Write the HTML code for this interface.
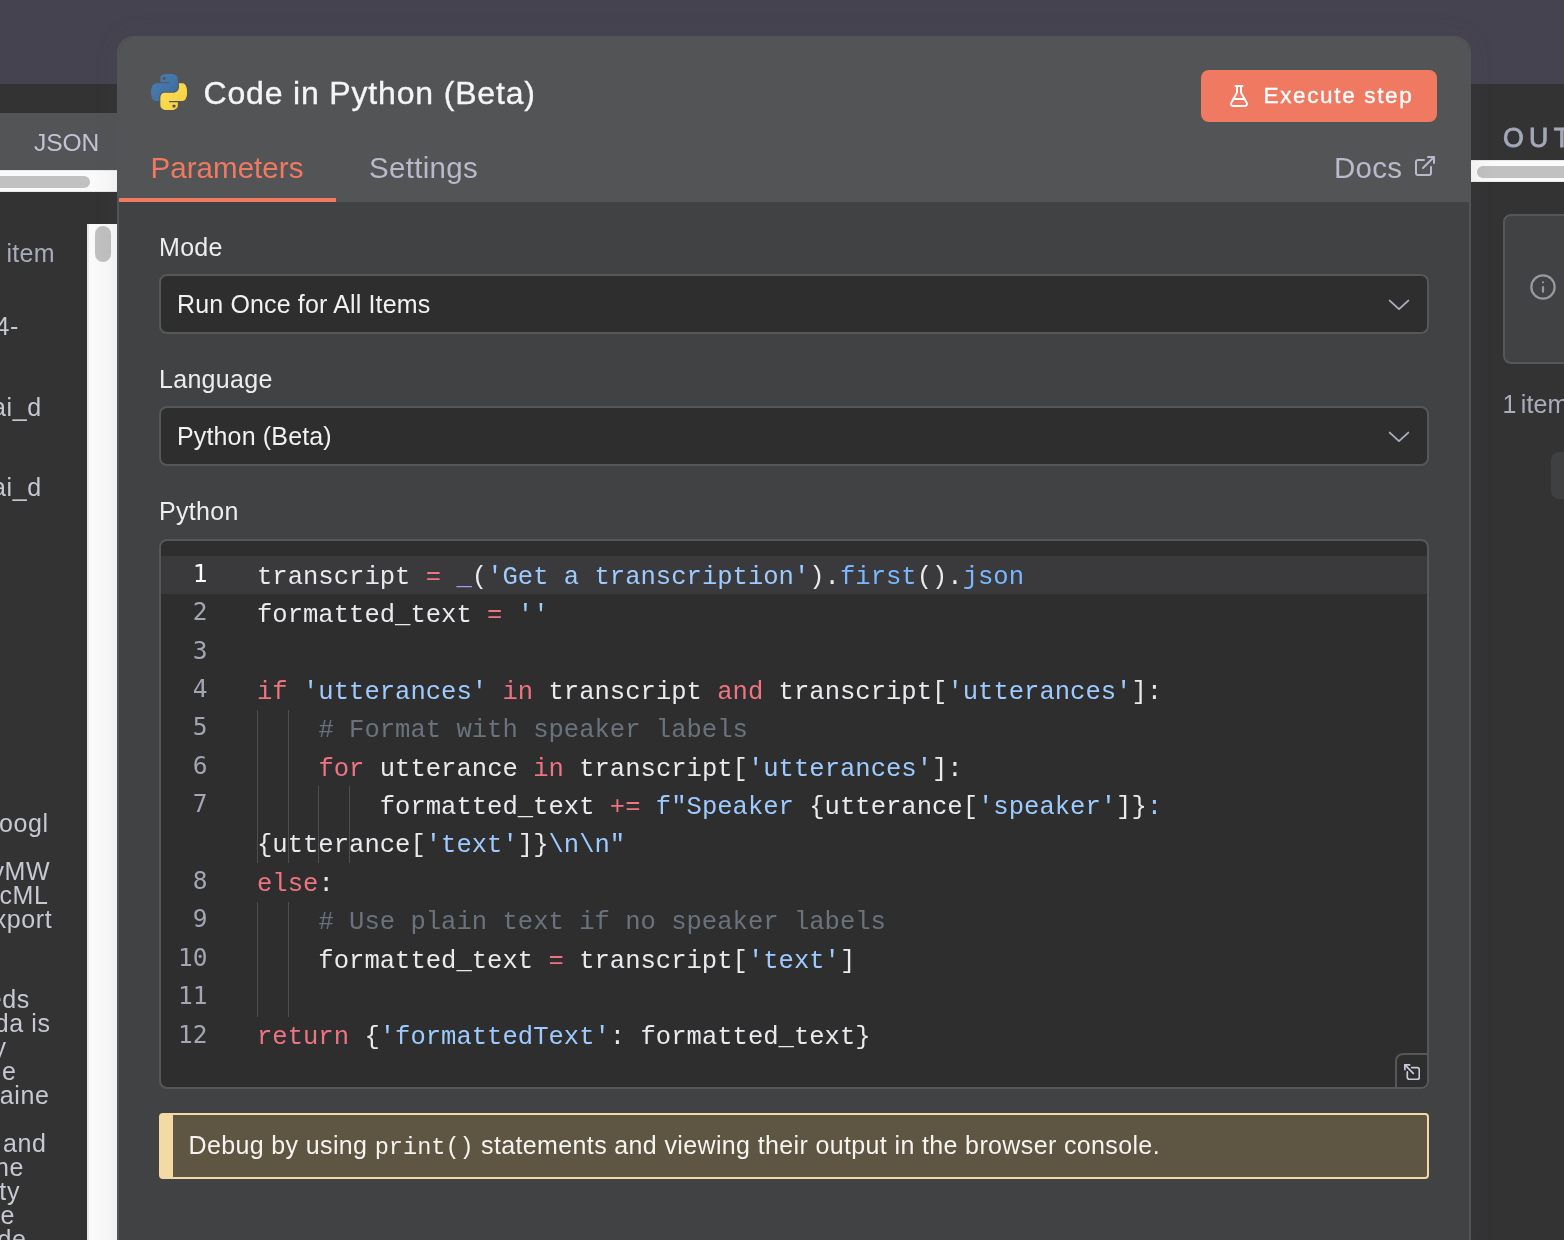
<!DOCTYPE html>
<html lang="en">
<head>
<meta charset="utf-8">
<title>Code in Python (Beta)</title>
<style>
*{box-sizing:border-box;margin:0;padding:0}
html,body{width:1564px;height:1240px;overflow:hidden}
body{background:#464350;font-family:"Liberation Sans",sans-serif;position:relative;color:#eee}
.abs{position:absolute}
#lp,#rp,#modal{will-change:transform}
/* side panels */
#lp{left:0;top:84px;width:117px;height:1156px;background:#333334;overflow:hidden}
#lp .top{left:0;top:0;width:117px;height:29px;background:#333334}
#lp .tabs{left:0;top:29px;width:117px;height:57px;background:#535456}
#lp .json{left:34px;top:44.6px;font-size:24.6px;line-height:28px;color:#c0c4d5;letter-spacing:-.1px}
#lp .hs{left:0;top:86px;width:117px;height:22px;background:#fafafa;border-top:1px solid #e8e8e8;border-bottom:1px solid #e8e8e8}
#lp .hst{left:-20px;top:92px;width:110px;height:12px;border-radius:6px;background:#c1c1c1}
#lp .vs{left:87px;top:140px;width:30px;height:1016px;background:#fafafa;border-left:2px solid #e8e8e8}
#lp .vst{left:95px;top:142px;width:16px;height:36px;border-radius:8px;background:#c1c1c1}
#lp .t{left:0;font-size:25px;line-height:24px;color:#c9cad3;white-space:pre;letter-spacing:.6px}
#rp{left:1471px;top:84px;width:93px;height:1156px;background:#333334;overflow:hidden}
#rp .out{left:32px;top:37px;font-size:28.4px;line-height:32px;font-weight:normal;-webkit-text-stroke:.9px #a4a8b8;letter-spacing:5.7px;color:#a4a8b8;white-space:pre;transform:scaleX(.94);transform-origin:0 0}
#rp .hs{left:0;top:76px;width:93px;height:22px;background:#fafafa;border-top:1px solid #e8e8e8;border-bottom:1px solid #e8e8e8}
#rp .hst{left:6px;top:82px;width:110px;height:12px;border-radius:6px;background:#c1c1c1}
#rp .box{left:32px;top:130px;width:90px;height:150px;border:2px solid #565759;border-radius:8px;background:#414243}
#rp .box2{left:80px;top:368px;width:40px;height:47px;border-radius:8px;background:#3f4041}
#rp .items{left:31.5px;top:306px;font-size:25px;line-height:28px;color:#a9acbc;white-space:pre;word-spacing:-2.8px;letter-spacing:.1px}
/* modal */
#modal{left:117px;top:36px;width:1354px;height:1230px;background:#414243;border:2px solid #535456;border-radius:17px 17px 0 0;overflow:hidden;box-shadow:0 0 26px rgba(88,86,104,.11)}
#hdr{left:0;top:0;width:1350px;height:164px;background:#535456}
#title{left:84.5px;top:34.7px;font-size:32px;line-height:40px;color:#f5f5f8;white-space:pre;letter-spacing:.83px;-webkit-text-stroke:.35px #f5f5f8}
#btn{left:1082px;top:32px;width:236px;height:52px;border-radius:8px;background:#f07a61}
#btn span{left:62.5px;top:10.3px;font-size:22.5px;line-height:32px;color:#fff;white-space:pre;letter-spacing:1.65px;-webkit-text-stroke:.35px #fff}
.tab{top:112px;font-size:29.5px;line-height:36px;white-space:pre;letter-spacing:.3px}
#tabp{left:31.5px;color:#f07a61;letter-spacing:.05px}
#tabs{left:250px;color:#b6bacb}
#docs{left:1215px;color:#b6bacb}
#ul{left:0;top:160px;width:217px;height:4px;background:#f07a61}
.lbl{left:40px;font-size:25px;line-height:30px;color:#ededf0;white-space:pre;letter-spacing:.3px}
.sel{left:40px;width:1270px;height:60px;border:2px solid #565759;border-radius:8px;background:#2e2e2e}
.sel span{left:16px;top:13px;font-size:25px;line-height:30px;color:#f1f1f3;white-space:pre;letter-spacing:.15px}
.sel svg{left:1226px;top:20.8px}
#ed{left:40px;top:501px;width:1270px;height:550px;border:2px solid #565759;border-radius:8px;background:#2e2e2e;overflow:hidden}
#ed .act{left:0;top:15px;width:1266px;height:38px;background:#3a3a3c}
.ln,.cl{font-family:"Liberation Mono",monospace;font-size:25.57px;line-height:38.4px;white-space:pre}
.ln{left:0;width:46.5px;text-align:right;color:#a3a5b2;font-family:"DejaVu Sans Mono","Liberation Mono",monospace;font-size:24.5px;margin-top:-1.2px}
.cl{left:96px;color:#eaeaee;margin-top:2.5px}
.k{color:#ee7482}.o{color:#ee7482}.s{color:#9ecbff}.c{color:#6a737d}.p{color:#b392f0}.f{color:#79b8ff}
.g{width:1px;background:#4e4e51}
#exp{left:1234px;top:512px;width:40px;height:40px;border:2px solid #565759;border-radius:8px 0 0 0;background:#2e2e2e}
#note{left:40px;top:1075px;width:1270px;height:66px;background:#5e5542;border:2px solid #f3d9a4;border-left:14px solid #f3d9a4;border-radius:4px}
#note span{left:15.5px;top:15.4px;font-size:25px;line-height:30px;color:#f6f4ee;white-space:pre;letter-spacing:.365px}
#note code{font-family:"Liberation Mono",monospace;font-size:23.6px;letter-spacing:0}
</style>
</head>
<body>
<div id="lp" class="abs">
  <div class="abs top"></div>
  <div class="abs tabs"></div>
  <div class="abs json">JSON</div>
  <div class="abs hs"></div><div class="abs hst"></div>
  <div class="abs vs"></div><div class="abs vst"></div>
  <div class="abs t" style="left:6.5px;top:157.3px;color:#a8abba;letter-spacing:.3px">item</div>
  <div class="abs t" style="left:auto;right:98px;top:230.3px;color:#c6c8d2">4-</div>
  <div class="abs t" style="left:auto;right:75.3px;top:311.3px;color:#c6c8d2">ai_d</div>
  <div class="abs t" style="left:auto;right:75.3px;top:390.6px;color:#c6c8d2">ai_d</div>
  <div class="abs t" style="left:auto;right:68.3px;top:727.3px;color:#c6c8d2">oogl</div>
  <div class="abs t" style="left:auto;right:66.8px;top:775.3px;color:#c6c8d2">yMW</div>
  <div class="abs t" style="left:auto;right:68.6px;top:799.3px;color:#c6c8d2">cML</div>
  <div class="abs t" style="left:auto;right:64.7px;top:823.3px;color:#c6c8d2">xport</div>
  <div class="abs t" style="left:auto;right:87.1px;top:903.3px;color:#c6c8d2">eds</div>
  <div class="abs t" style="left:auto;right:66.5px;top:927.3px;color:#c6c8d2">da is</div>
  <div class="abs t" style="left:auto;right:110.5px;top:951.3px;color:#c6c8d2">y</div>
  <div class="abs t" style="left:auto;right:100.5px;top:975.3px;color:#c6c8d2">e</div>
  <div class="abs t" style="left:auto;right:67.5px;top:999.3px;color:#c6c8d2">aine</div>
  <div class="abs t" style="left:auto;right:70.4px;top:1047.3px;color:#c6c8d2"> and</div>
  <div class="abs t" style="left:auto;right:93.1px;top:1071.3px;color:#c6c8d2">ne</div>
  <div class="abs t" style="left:auto;right:97px;top:1095.3px;color:#c6c8d2">ty</div>
  <div class="abs t" style="left:auto;right:102px;top:1119.3px;color:#c6c8d2">e</div>
  <div class="abs t" style="left:auto;right:90.6px;top:1143.3px;color:#c6c8d2">de</div>
</div>
<div id="rp" class="abs">
  <div class="abs out">OUTPUT</div>
  <div class="abs hs"></div><div class="abs hst"></div>
  <div class="abs box"></div>
  <svg class="abs" style="left:58.1px;top:188.6px" width="28" height="28" viewBox="0 0 24 24" fill="none" stroke="#999a9f" stroke-width="1.9" stroke-linecap="round" stroke-linejoin="round"><circle cx="12" cy="12" r="10"/><path d="M12 16v-4"/><path d="M12 8h.01"/></svg>
  <div class="abs items">1 item</div>
  <div class="abs box2"></div>
</div>
<div id="modal" class="abs">
  <div id="hdr" class="abs"></div>
  <svg class="abs" id="pylogo" style="left:32px;top:36px" width="36" height="36.4" viewBox="0 0 110.4 111.6"><defs><linearGradient id="pb" x1="0" y1="0" x2="1" y2="1"><stop offset="0" stop-color="#4a7fb5"/><stop offset="1" stop-color="#3d6a9b"/></linearGradient><linearGradient id="pyl" x1="0" y1="0" x2="1" y2="1"><stop offset="0" stop-color="#fbe05a"/><stop offset="1" stop-color="#f7cd3c"/></linearGradient></defs><path fill="url(#pb)" d="M54.919 0c-4.584.022-8.961.413-12.813 1.095C30.760 3.099 28.700 7.295 28.700 15.032v10.219h26.813v3.406H18.638c-7.792 0-14.616 4.684-16.750 13.594-2.462 10.213-2.571 16.586 0 27.250 1.906 7.938 6.458 13.594 14.250 13.594h9.218v-12.250c0-8.850 7.657-16.656 16.750-16.656h26.782c7.455 0 13.406-6.138 13.406-13.625V15.032c0-7.266-6.130-12.725-13.406-13.937C64.282.328 59.502-.02 54.919 0zm-14.500 8.220c2.770 0 5.031 2.298 5.031 5.125 0 2.816-2.262 5.093-5.031 5.093-2.780 0-5.031-2.277-5.031-5.093 0-2.827 2.252-5.125 5.031-5.125z"/><path fill="url(#pyl)" d="M85.638 28.657v11.906c0 9.231-7.826 17-16.750 17H42.106c-7.336 0-13.406 6.279-13.406 13.625V96.720c0 7.266 6.319 11.540 13.406 13.625 8.488 2.496 16.627 2.947 26.782 0 6.750-1.954 13.406-5.888 13.406-13.625V86.501H55.513v-3.406h40.187c7.792 0 10.696-5.435 13.406-13.594 2.799-8.399 2.680-16.476 0-27.250-1.926-7.757-5.604-13.594-13.406-13.594zM70.575 93.313c2.780 0 5.031 2.278 5.031 5.094 0 2.826-2.252 5.125-5.031 5.125-2.770 0-5.031-2.299-5.031-5.125 0-2.816 2.262-5.094 5.031-5.094z"/></svg>
  <div id="title" class="abs">Code in Python (Beta)</div>
  <div id="btn" class="abs"><svg class="abs" style="left:25.9px;top:14px" width="24" height="24" viewBox="0 0 24 24" fill="none" stroke="#fff" stroke-width="1.9" stroke-linecap="round" stroke-linejoin="round"><path d="M14 2v6a2 2 0 0 0 .245.96l5.51 10.08A2 2 0 0 1 18 22H6a2 2 0 0 1-1.755-2.96l5.51-10.08A2 2 0 0 0 10 8V2"/><path d="M6.453 15h11.094"/><path d="M8.5 2h7"/></svg><span class="abs">Execute step</span></div>
  <div id="tabp" class="abs tab">Parameters</div>
  <div id="tabs" class="abs tab">Settings</div>
  <div id="docs" class="abs tab">Docs</div>
  <svg class="abs" style="left:1294px;top:116px" width="24" height="24" viewBox="0 0 24 24" fill="none" stroke="#b6bacb" stroke-width="2" stroke-linecap="round" stroke-linejoin="round"><path d="M15 3h6v6"/><path d="M10 14 21 3"/><path d="M18 13v6a2 2 0 0 1-2 2H5a2 2 0 0 1-2-2V8a2 2 0 0 1 2-2h6"/></svg>
  <div id="ul" class="abs"></div>
  <div class="abs lbl" style="top:194px">Mode</div>
  <div class="abs sel" style="top:236px"><span class="abs">Run Once for All Items</span><svg class="abs" width="24" height="16" viewBox="0 0 24 16" fill="none" stroke="#abaebd" stroke-width="1.9" stroke-linecap="round" stroke-linejoin="round"><path d="M2.7 3.6 12 12.1 21.3 3.6"/></svg></div>
  <div class="abs lbl" style="top:326px">Language</div>
  <div class="abs sel" style="top:368px"><span class="abs">Python (Beta)</span><svg class="abs" width="24" height="16" viewBox="0 0 24 16" fill="none" stroke="#abaebd" stroke-width="1.9" stroke-linecap="round" stroke-linejoin="round"><path d="M2.7 3.6 12 12.1 21.3 3.6"/></svg></div>
  <div class="abs lbl" style="top:458px">Python</div>
  <div id="ed" class="abs"><div class="abs act"></div>
    <div class="abs ln" style="top:15.0px;color:#fff">1</div>
    <div class="abs cl" style="top:15.0px">transcript <span class="o">=</span> <span class="p">_</span>(<span class="s">'Get a transcription'</span>).<span class="f">first</span>().<span class="f">json</span></div>
    <div class="abs ln" style="top:53.4px">2</div>
    <div class="abs cl" style="top:53.4px">formatted_text <span class="o">=</span> <span class="s">''</span></div>
    <div class="abs ln" style="top:91.8px">3</div>
    <div class="abs ln" style="top:130.2px">4</div>
    <div class="abs cl" style="top:130.2px"><span class="k">if</span> <span class="s">'utterances'</span> <span class="k">in</span> transcript <span class="k">and</span> transcript[<span class="s">'utterances'</span>]:</div>
    <div class="abs ln" style="top:168.6px">5</div>
    <div class="abs cl" style="top:168.6px">    <span class="c"># Format with speaker labels</span></div>
    <div class="abs ln" style="top:207.0px">6</div>
    <div class="abs cl" style="top:207.0px">    <span class="k">for</span> utterance <span class="k">in</span> transcript[<span class="s">'utterances'</span>]:</div>
    <div class="abs ln" style="top:245.4px">7</div>
    <div class="abs cl" style="top:245.4px">        formatted_text <span class="o">+=</span> <span class="s">f"Speaker </span>{utterance[<span class="s">'speaker'</span>]}<span class="s">:</span></div>
    <div class="abs cl" style="top:283.8px">{utterance[<span class="s">'text'</span>]}<span class="s">\n\n"</span></div>
    <div class="abs ln" style="top:322.2px">8</div>
    <div class="abs cl" style="top:322.2px"><span class="k">else</span>:</div>
    <div class="abs ln" style="top:360.6px">9</div>
    <div class="abs cl" style="top:360.6px">    <span class="c"># Use plain text if no speaker labels</span></div>
    <div class="abs ln" style="top:399.0px">10</div>
    <div class="abs cl" style="top:399.0px">    formatted_text <span class="o">=</span> transcript[<span class="s">'text'</span>]</div>
    <div class="abs ln" style="top:437.4px">11</div>
    <div class="abs ln" style="top:475.8px">12</div>
    <div class="abs cl" style="top:475.8px"><span class="k">return</span> {<span class="s">'formattedText'</span>: formatted_text}</div>
    <div class="abs g" style="left:96.0px;top:168.6px;height:153.6px"></div>
    <div class="abs g" style="left:126.7px;top:168.6px;height:153.6px"></div>
    <div class="abs g" style="left:157.4px;top:245.4px;height:76.8px"></div>
    <div class="abs g" style="left:188.1px;top:245.4px;height:76.8px"></div>
    <div class="abs g" style="left:96.0px;top:360.6px;height:115.2px"></div>
    <div class="abs g" style="left:126.7px;top:360.6px;height:115.2px"></div>
    <div id="exp" class="abs"><svg class="abs" style="left:7px;top:9px" width="16" height="16" viewBox="0 0 16 16" fill="none" stroke="#c8cbda" stroke-width="1.7" stroke-linecap="round" stroke-linejoin="round"><path d="M7.7 3.6H13.3a2 2 0 0 1 2 2V13.3a2 2 0 0 1-2 2H5.3a2 2 0 0 1-2-2V7.9"/><path d="M.9 .9 9.3 9.3"/><path d="M.9 5.6V.9H5.6"/></svg></div>
  </div>
  <div id="note" class="abs"><span class="abs">Debug by using <code>print()</code> statements and viewing their output in the browser console.</span></div>
</div>
</body>
</html>
